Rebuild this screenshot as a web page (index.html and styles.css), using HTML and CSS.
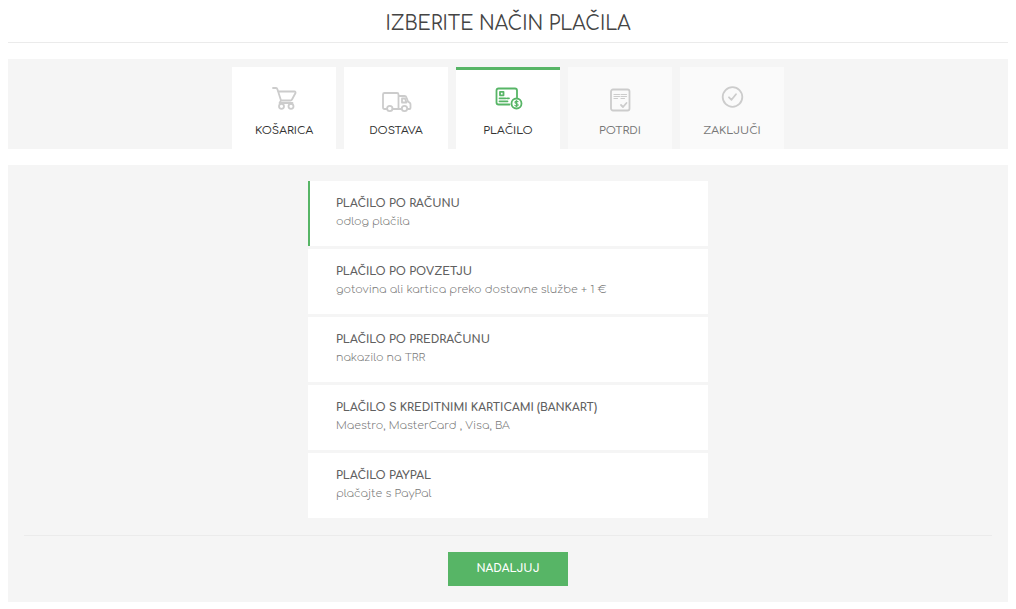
FILE: index.html
```html
<!DOCTYPE html>
<html lang="sl">
<head>
    <meta charset="UTF-8">
    <meta name="viewport" content="width=device-width, initial-scale=1.0">
    <title>Izberite način plačila</title>
    <link rel="stylesheet" href="styles.css">
</head>
<body>

    <h1 class="page-title">IZBERITE NAČIN PLAČILA</h1>

    <!-- Koraki nakupa -->
    <nav class="steps">
        <a class="step" href="#kosarica">
            <svg class="step-icon" viewBox="0 0 32 32">
                <path d="M5 5h3q1 0 1.500 1.500L13 17.500h9.500q1 0 1.500-1L27.500 10q.3-1.500-1-1.500H10M13 17.500l-1.500 2.500h13"/>
                <circle cx="13.500" cy="23.300" r="2.500"/>
                <circle cx="23" cy="23.300" r="2.500"/>
            </svg>
            <span class="step-name">KOŠARICA</span>
        </a>
        <a class="step" href="#dostava">
            <svg class="step-icon" viewBox="0 0 32 32">
                <path d="M6.500 26H4.500q-1.500 0-1.500-1.500V11.500q0-1.500 1.500-1.500h12.500q1.500 0 1.500 1.500v14.500h-6M18.500 13h6q1.500 0 2 1.500l1.500 4 2 1.500q.5.5.5 1.500V25q0 1-1 1h-1.500M18.500 26h3"/>
                <path d="M22 15.500h3l1.500 4h-4.500z"/>
                <circle cx="9.800" cy="25.500" r="2.700"/>
                <circle cx="24.500" cy="25.500" r="2.700"/>
            </svg>
            <span class="step-name">DOSTAVA</span>
        </a>
        <a class="step active" href="#placilo" aria-current="step">
            <svg class="step-icon" viewBox="0 0 32 32">
                <path d="M17.500 21.500H6.500q-2 0-2-2V7.500q0-2 2-2h16.500q2 0 2 2V14.500"/>
                <path d="M8 8.800h3.500v3.500h-3.500zM7.500 15.300h6M15 15.300h2M7.500 18.300h8"/>
                <circle cx="24.500" cy="20.500" r="5"/>
                <path class="thin" d="M26 18.700q-.8-.6-1.500-.6-1.500 0-1.500 1.100 0 1 1.500 1.300 1.600.3 1.600 1.400 0 1.100-1.600 1.100-.9 0-1.600-.7M24.500 17.500v6"/>
            </svg>
            <span class="step-name">PLAČILO</span>
        </a>
        <a class="step pending" href="#potrdi">
            <svg class="step-icon" viewBox="0 0 32 32">
                <rect x="7" y="6.500" width="18.500" height="21" rx="2"/>
                <path class="thin" d="M10 11.500h5.500M10 13.500h5.500M10 15.500h3.500M17 11.500h5.500M17 13.500h5.500M17 15.500h3.500"/>
                <path d="M17 22l2 2 3.500-4"/>
            </svg>
            <span class="step-name">POTRDI</span>
        </a>
        <a class="step pending" href="#zakljuci">
            <svg class="step-icon" viewBox="0 0 32 32">
                <circle cx="16.500" cy="14" r="9.800"/>
                <path d="M13 14.300l2.500 2.500 4.500-5.500"/>
            </svg>
            <span class="step-name">ZAKLJUČI</span>
        </a>
    </nav>

    <form class="payment">
        <div class="payment-list">
            <label class="option">
                <input type="radio" name="placilo" value="racun" checked>
                <span class="option-name">PLAČILO PO RAČUNU</span>
                <span class="option-info">odlog plačila</span>
            </label>
            <label class="option">
                <input type="radio" name="placilo" value="povzetje">
                <span class="option-name">PLAČILO PO POVZETJU</span>
                <span class="option-info">gotovina ali kartica preko dostavne službe + 1 €</span>
            </label>
            <label class="option">
                <input type="radio" name="placilo" value="predracun">
                <span class="option-name">PLAČILO PO PREDRAČUNU</span>
                <span class="option-info">nakazilo na TRR</span>
            </label>
            <label class="option">
                <input type="radio" name="placilo" value="kartica">
                <span class="option-name">PLAČILO S KREDITNIMI KARTICAMI (BANKART)</span>
                <span class="option-info">Maestro, MasterCard , Visa, BA</span>
            </label>
            <label class="option">
                <input type="radio" name="placilo" value="paypal">
                <span class="option-name">PLAČILO PAYPAL</span>
                <span class="option-info">plačajte s PayPal</span>
            </label>
        </div>
        <div class="payment-footer">
            <button type="submit" class="button">NADALJUJ</button>
        </div>
    </form>

</body>
</html>
```
FILE: styles.css
```css
body {
    margin: 0 8px;
    background-color: #ffffff;
    color: #444444;
    font-family: Comfortaa, Lato, sans-serif;
    font-size: 11px;
}

.page-title {
    margin: 0 0 16px;
    padding: 10px 0 4px;
    border-bottom: 1px solid #ebebeb;
    font-size: 19px;
    font-weight: 400;
    line-height: 28px;
    text-align: center;
}

/* Koraki */
.steps {
    display: flex;
    justify-content: center;
    gap: 8px;
    margin-bottom: 16px;
    padding-top: 8px;
    background-color: #f5f5f5;
}

.step {
    display: flex;
    flex-direction: column;
    align-items: center;
    gap: 8px;
    box-sizing: border-box;
    width: 104px;
    padding: 13px 0 10px;
    border-top: 3px solid #ffffff;
    background-color: #ffffff;
    color: #333333;
    font-weight: 500;
    line-height: 16px;
    text-decoration: none;
}

.step-icon {
    width: 32px;
    height: 32px;
    fill: none;
    stroke: #cccccc;
    stroke-width: 1.8;
    stroke-linecap: round;
    stroke-linejoin: round;
}

.step-icon .thin {
    stroke-width: 1.2;
}

.step.active {
    border-top-color: #57b566;
}

.step.active .step-icon {
    stroke: #57b566;
}

.step.pending {
    border-top-color: #fafafa;
    background-color: #fafafa;
    color: #777777;
}

/* Načini plačila */
.payment {
    padding: 16px;
    background-color: #f5f5f5;
}

.payment-list {
    display: flex;
    flex-direction: column;
    gap: 3px;
    max-width: 400px;
    margin: 0 auto 17px;
}

.option {
    display: flex;
    flex-direction: column;
    padding: 14px 26px 15px;
    border-left: 2px solid #ffffff;
    background-color: #ffffff;
    line-height: 18px;
    cursor: pointer;
}

.option input {
    position: absolute;
    opacity: 0;
}

.option:has(input:checked) {
    border-left-color: #57b566;
}

.option-name {
    color: #606060;
    font-weight: 700;
}

.option-info {
    color: #777777;
    font-weight: 300;
}

.payment-footer {
    display: flex;
    justify-content: center;
    padding-top: 16px;
    border-top: 1px solid #ebebeb;
}

.button {
    padding: 8px 28px;
    border: none;
    background-color: #57b566;
    color: #ffffff;
    font-family: inherit;
    font-size: 11px;
    font-weight: 700;
    line-height: 18px;
    cursor: pointer;
}

.button:hover {
    background-color: #489f56;
}
```
